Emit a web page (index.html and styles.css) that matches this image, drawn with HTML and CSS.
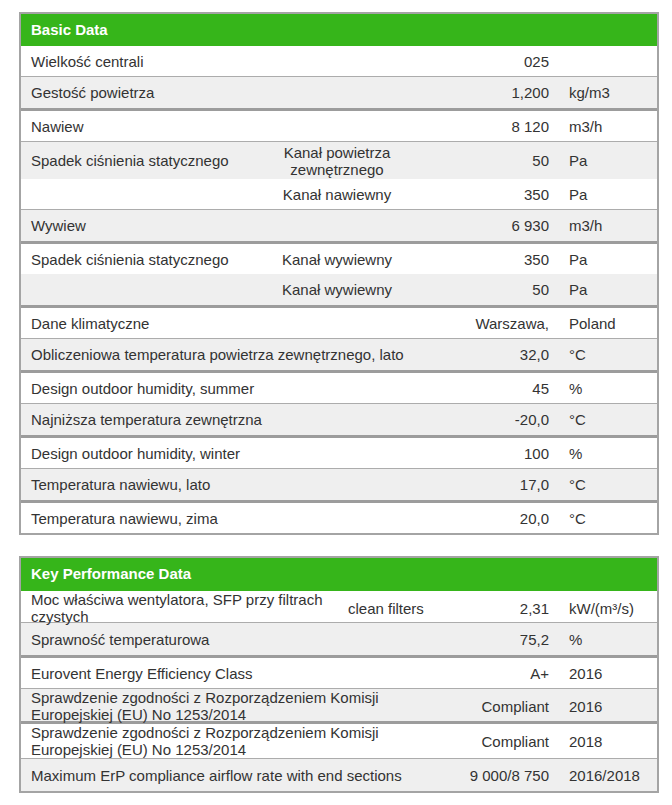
FILE: index.html
```html
<!DOCTYPE html>
<html lang="pl">
<head>
<meta charset="utf-8">
<title>Basic Data</title>
<link rel="stylesheet" href="styles.css">
</head>
<body>
<div class="page">
  <section class="tbl t1">
    <div class="head">Basic Data</div>
    <div class="row w"><div class="lab span">Wielkość centrali</div><div class="val">025</div><div class="unit"></div></div>
    <div class="row g"><div class="lab span">Gestość powietrza</div><div class="val">1,200</div><div class="unit">kg/m3</div></div>
    <div class="row w"><div class="lab span">Nawiew</div><div class="val">8 120</div><div class="unit">m3/h</div></div>
    <div class="row g nb h37"><div class="lab">Spadek ciśnienia statycznego</div><div class="sub">Kanał powietrza zewnętrznego</div><div class="val">50</div><div class="unit">Pa</div></div>
    <div class="row w"><div class="lab"></div><div class="sub">Kanał nawiewny</div><div class="val">350</div><div class="unit">Pa</div></div>
    <div class="row g"><div class="lab span">Wywiew</div><div class="val">6 930</div><div class="unit">m3/h</div></div>
    <div class="row w nb"><div class="lab">Spadek ciśnienia statycznego</div><div class="sub">Kanał wywiewny</div><div class="val">350</div><div class="unit">Pa</div></div>
    <div class="row g"><div class="lab"></div><div class="sub">Kanał wywiewny</div><div class="val">50</div><div class="unit">Pa</div></div>
    <div class="row w"><div class="lab span">Dane klimatyczne</div><div class="val">Warszawa,</div><div class="unit">Poland</div></div>
    <div class="row g"><div class="lab span">Obliczeniowa temperatura powietrza zewnętrznego, lato</div><div class="val">32,0</div><div class="unit">°C</div></div>
    <div class="row w"><div class="lab span">Design outdoor humidity, summer</div><div class="val">45</div><div class="unit">%</div></div>
    <div class="row g"><div class="lab span">Najniższa temperatura zewnętrzna</div><div class="val">-20,0</div><div class="unit">°C</div></div>
    <div class="row w"><div class="lab span">Design outdoor humidity, winter</div><div class="val">100</div><div class="unit">%</div></div>
    <div class="row g"><div class="lab span">Temperatura nawiewu, lato</div><div class="val">17,0</div><div class="unit">°C</div></div>
    <div class="row w last"><div class="lab span">Temperatura nawiewu, zima</div><div class="val">20,0</div><div class="unit">°C</div></div>
  </section>

  <section class="tbl t2">
    <div class="head">Key Performance Data</div>
    <div class="row w h31"><div class="lab">Moc właściwa wentylatora, SFP przy filtrach czystych</div><div class="sub">clean filters</div><div class="val">2,31</div><div class="unit">kW/(m³/s)</div></div>
    <div class="row g h32"><div class="lab span">Sprawność temperaturowa</div><div class="val">75,2</div><div class="unit">%</div></div>
    <div class="row w"><div class="lab span">Eurovent Energy Efficiency Class</div><div class="val">A+</div><div class="unit">2016</div></div>
    <div class="row g h32"><div class="lab span">Sprawdzenie zgodności z Rozporządzeniem Komisji Europejskiej (EU) No 1253/2014</div><div class="val">Compliant</div><div class="unit">2016</div></div>
    <div class="row w h34"><div class="lab span">Sprawdzenie zgodności z Rozporządzeniem Komisji Europejskiej (EU) No 1253/2014</div><div class="val">Compliant</div><div class="unit">2018</div></div>
    <div class="row g h32 last"><div class="lab span">Maximum ErP compliance airflow rate with end sections</div><div class="val">9 000/8 750</div><div class="unit">2016/2018</div></div>
  </section>
</div>
</body>
</html>
```

FILE: styles.css
```css
html, body {
  margin: 0;
  padding: 0;
  background: #ffffff;
}

body {
  font-family: "Liberation Sans", Arial, sans-serif;
  font-size: 15px;
  line-height: 17px;
  color: #333333;
}

.page {
  padding: 12px 0 0 19px;
}

.tbl {
  width: 640px;
  box-sizing: border-box;
  border: 2px solid #a4a4a4;
}

.t2 {
  margin-top: 21px;
}

.head {
  height: 32px;
  background: #36b51a;
  color: #ffffff;
  font-weight: bold;
  display: flex;
  align-items: center;
  padding: 0 10px 2px;
  box-sizing: border-box;
}

.t2 .head {
  height: 33px;
}

.row {
  display: grid;
  height: 30px;
  align-items: center;
  border-bottom: 1px solid #acacac;
  background: #ffffff;
}

.t1 .row {
  grid-template-columns: 236px 160px 132px 108px;
}

.t2 .row {
  grid-template-columns: 319px 108px 101px 108px;
}

.row.g {
  background: #efefef;
  height: 31px;
  border-bottom: 3px solid #9c9c9c;
}

.row.nb {
  border-bottom: none;
}

.row.last {
  border-bottom: none;
}

.row.h31 { height: 31px; }
.row.h32 { height: 32px; }
.row.h34 { height: 34px; }
.row.h37 { height: 37px; }

.lab {
  padding-left: 10px;
  white-space: normal;
}

.lab.span {
  grid-column: 1 / 3;
}

.sub {
  text-align: center;
}

.t2 .sub {
  text-align: left;
  padding-left: 8px;
}

.val {
  text-align: right;
  white-space: nowrap;
}

.unit {
  padding-left: 20px;
  white-space: nowrap;
}
```
